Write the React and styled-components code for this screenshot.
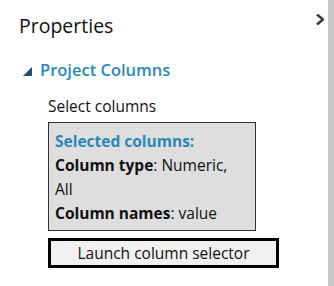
import React from 'react';
import styled, { createGlobalStyle } from 'styled-components';

const GlobalStyle = createGlobalStyle`
  html, body {
    margin: 0;
    padding: 0;
    background: #fff;
  }
  body {
    font-family: "Open Sans", "Noto Sans", sans-serif;
    color: #111;
  }
`;

const Frame = styled.div`
  display: flex;
  width: 334px;
  height: 286px;
  overflow: hidden;
`;

const Panel = styled.div`
  flex: 1;
  display: flex;
  flex-direction: column;
`;

const Edge = styled.div`
  width: 6px;
  background: #c8c8c8;
`;

const Header = styled.div`
  display: flex;
  justify-content: space-between;
  align-items: flex-start;
  padding: 13px 4px 0 19px;
`;

const Title = styled.h1`
  margin: 0;
  font-size: 19.5px;
  font-weight: 400;
  line-height: 26px;
  color: #111;
`;

const Collapse = styled.button`
  margin-top: 1px;
  padding: 0;
  border: 0;
  background: none;
  color: #3a3a3a;
  svg {
    display: block;
    width: 8px;
    height: 11px;
  }
`;

const Section = styled.div`
  display: flex;
  flex-direction: column;
  padding: 20px 0 0 23px;
`;

const SectionHead = styled.div`
  display: flex;
  align-items: center;
  gap: 8px;
  font-size: 16.5px;
  font-weight: 600;
  line-height: 22px;
  color: #2b88b6;
  svg {
    width: 9px;
    height: 9px;
    margin-top: 3px;
  }
`;

const Body = styled.div`
  display: flex;
  flex-direction: column;
  align-items: flex-start;
  padding: 15px 0 0 25px;
`;

const Label = styled.div`
  font-size: 15.5px;
  line-height: 20px;
  color: #111;
`;

const Summary = styled.div`
  box-sizing: border-box;
  width: 208px;
  margin-top: 6px;
  padding: 6px 12px 5px 6px;
  background: #dedede;
  border: 1px solid #333;
  font-size: 15.5px;
  line-height: 24px;
  color: #111;
`;

const SummaryTitle = styled.div`
  font-weight: 700;
  color: #2b88b6;
`;

const Key = styled.b`
  font-weight: 700;
`;

const LaunchButton = styled.button`
  box-sizing: border-box;
  width: 231px;
  height: 30px;
  margin-top: 7px;
  padding: 0;
  background: #f0f0f0;
  border: 3px solid #000;
  font-family: inherit;
  font-size: 15.5px;
  color: #111;
`;

export default function App() {
  return (
    <>
      <GlobalStyle />
      <Frame>
        <Panel>
          <Header>
            <Title>Properties</Title>
            <Collapse aria-label="Collapse">
              <svg viewBox="0 0 8 11">
                <path d="M1 0.5 L7 5.5 L1 10.5" fill="none" stroke="currentColor" strokeWidth="2.6" />
              </svg>
            </Collapse>
          </Header>
          <Section>
            <SectionHead>
              <svg viewBox="0 0 9 9">
                <polygon points="9,0 9,9 0,9" fill="#1f4f70" />
              </svg>
              Project Columns
            </SectionHead>
            <Body>
              <Label>Select columns</Label>
              <Summary>
                <SummaryTitle>Selected columns:</SummaryTitle>
                <div>
                  <Key>Column type</Key>: Numeric, All
                </div>
                <div>
                  <Key>Column names</Key>: value
                </div>
              </Summary>
              <LaunchButton>Launch column selector</LaunchButton>
            </Body>
          </Section>
        </Panel>
        <Edge />
      </Frame>
    </>
  );
}
